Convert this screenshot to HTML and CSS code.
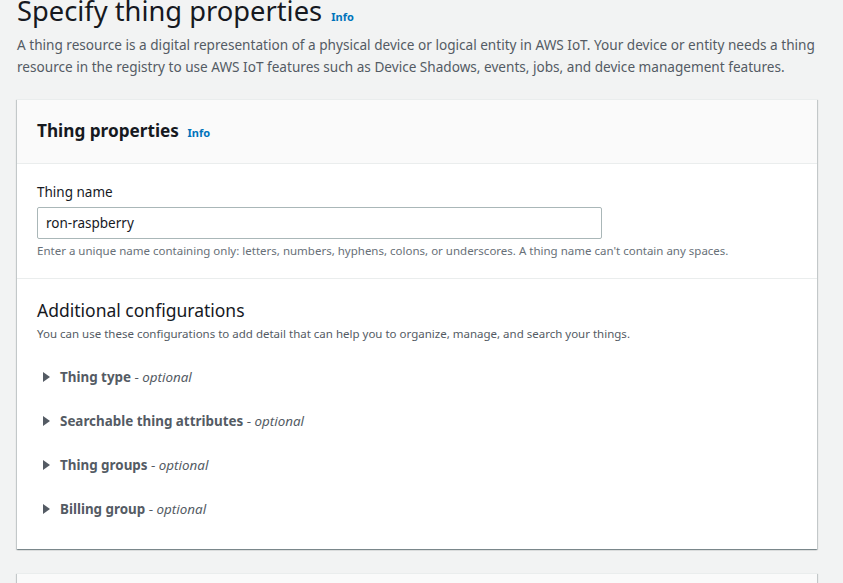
FILE: index.html
```html
<!DOCTYPE html>
<html lang="en">
<head>
<meta charset="utf-8">
<title>Specify thing properties</title>
<link rel="stylesheet" href="styles.css">
</head>
<body>
<main class="page">
  <header class="page-header">
    <h1 class="page-title">Specify thing properties <a class="info" href="#">Info</a></h1>
    <p class="page-desc">A thing resource is a digital representation of a physical device or logical entity in AWS IoT. Your device or entity needs a thing resource in the registry to use AWS IoT features such as Device Shadows, events, jobs, and device management features.</p>
  </header>

  <section class="card">
    <div class="card-header">
      <h2 class="card-title">Thing properties <a class="info" href="#">Info</a></h2>
    </div>
    <div class="card-section">
      <label class="field-label" for="thing-name">Thing name</label>
      <input class="text-input" id="thing-name" type="text" value="ron-raspberry">
      <p class="field-hint">Enter a unique name containing only: letters, numbers, hyphens, colons, or underscores. A thing name can't contain any spaces.</p>
    </div>
    <div class="card-section config">
      <h3 class="config-title">Additional configurations</h3>
      <p class="config-desc">You can use these configurations to add detail that can help you to organize, manage, and search your things.</p>
      <ul class="expand-list">
        <li class="expand-item"><span class="caret"></span><span class="expand-label">Thing type</span><span class="optional"> - <em>optional</em></span></li>
        <li class="expand-item"><span class="caret"></span><span class="expand-label">Searchable thing attributes</span><span class="optional"> - <em>optional</em></span></li>
        <li class="expand-item"><span class="caret"></span><span class="expand-label">Thing groups</span><span class="optional"> - <em>optional</em></span></li>
        <li class="expand-item"><span class="caret"></span><span class="expand-label">Billing group</span><span class="optional"> - <em>optional</em></span></li>
      </ul>
    </div>
  </section>

  <section class="card card-next">
    <div class="card-header"></div>
  </section>
</main>
</body>
</html>
```

FILE: styles.css
```css
* { box-sizing: border-box; }

html, body {
  margin: 0;
  padding: 0;
  background: #f2f3f3;
  font-family: "Noto Sans", "Open Sans", sans-serif;
  color: #16191f;
  overflow: hidden;
}

.page {
  margin-top: -7px;
  padding: 0 26px 0 17px;
}

.page-title {
  margin: 0;
  font-size: 27.3px;
  font-weight: 400;
  line-height: 36px;
  color: #16191f;
}

.info {
  font-size: 11px;
  font-weight: 700;
  color: #0073bb;
  text-decoration: none;
  margin-left: 2px;
}

.page-desc {
  margin: -1px 0 0;
  font-size: 13.6px;
  line-height: 22px;
  color: #545b64;
}

.card {
  margin-top: 21px;
  background: #fff;
  box-shadow: 0 1px 1px 0 rgba(0, 28, 36, 0.3), 1px 1px 1px 0 rgba(0, 28, 36, 0.15), -1px 1px 1px 0 rgba(0, 28, 36, 0.15);
  border-top: 1px solid #eaeded;
}

.card-header {
  background: #fafafa;
  border-bottom: 1px solid #eaeded;
  padding: 18px 20px 0;
  height: 64px;
}

.card-title {
  margin: 0;
  font-size: 17.2px;
  font-weight: 700;
  line-height: 26px;
}

.card-title .info { margin-left: 4px; }

.card-section {
  padding: 17px 20px 18px;
  border-bottom: 1px solid #eaeded;
}

.card-section:last-child { border-bottom: 0; }

.field-label {
  display: block;
  font-size: 13.5px;
  line-height: 22px;
  color: #16191f;
}

.text-input {
  display: block;
  margin-top: 4px;
  width: 565px;
  height: 32px;
  padding: 0 8px;
  border: 1px solid #aab7b8;
  border-radius: 2px;
  font-family: inherit;
  font-size: 13.5px;
  color: #16191f;
  background: #fff;
}

.field-hint {
  margin: 3px 0 0;
  font-size: 11.5px;
  line-height: 18px;
  color: #687078;
}

.config { padding-top: 18px; padding-bottom: 29px; }

.config-title {
  margin: 0;
  font-size: 17.5px;
  font-weight: 400;
  line-height: 26px;
}

.config-desc {
  margin: 2px 0 0;
  font-size: 11.5px;
  line-height: 18px;
  color: #545b64;
}

.expand-list {
  list-style: none;
  margin: 23px 0 0;
  padding: 0;
  display: flex;
  flex-direction: column;
  gap: 22px;
}

.expand-item {
  display: flex;
  align-items: center;
  height: 22px;
  font-size: 13.4px;
  color: #545b64;
  padding-left: 6px;
}

.caret {
  width: 0;
  height: 0;
  border-top: 5px solid transparent;
  border-bottom: 5px solid transparent;
  border-left: 7px solid #545b64;
  margin-right: 10px;
}

.expand-label { font-weight: 700; }

.optional { white-space: pre; }

.card-next { margin-top: 24px; }
.card-next .card-header { height: 40px; }
```
